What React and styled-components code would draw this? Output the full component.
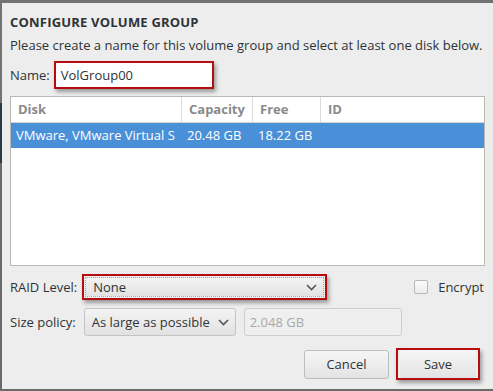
import React from 'react';
import styled, { createGlobalStyle } from 'styled-components';

const Global = createGlobalStyle`
  html, body {
    margin: 0;
    padding: 0;
    background: #7b7b7b;
    font-family: "Open Sans", "DejaVu Sans", sans-serif;
  }
`;

const Screen = styled.div`
  width: 493px;
  height: 391px;
  overflow: hidden;
  padding: 3px 0 2px 2px;
  box-sizing: border-box;
  background: linear-gradient(to bottom, #727272 0, #727272 103px, #2f3a47 103px, #2f3a47 163px, #6a6a6a 163px);
`;

const Dialog = styled.div`
  height: 100%;
  background: #ededed;
  color: #2e3436;
  font-size: 13px;
  padding: 9px 8px 0 8px;
  box-sizing: border-box;
  display: flex;
  flex-direction: column;
`;

const Title = styled.div`
  font-weight: bold;
  font-size: 13px;
  letter-spacing: 0.2px;
  height: 20px;
  line-height: 20px;
`;

const Hint = styled.div`
  margin-top: 3px;
  height: 20px;
  line-height: 20px;
`;

const Row = styled.div`
  display: flex;
  align-items: center;
  gap: ${({ gap }) => gap || 6}px;
  margin-top: ${({ top }) => top || 0}px;
  padding-right: ${({ right }) => right || 0}px;
`;

const Label = styled.span`
  white-space: nowrap;
`;

const Marked = styled.div`
  border: 2px solid #b50d0d;
  box-shadow: 2px 3px 4px rgba(0, 0, 0, 0.35);
  padding: ${({ pad }) => pad || 0};
  box-sizing: border-box;
  display: flex;
`;

const NameInput = styled.div`
  width: 156px;
  height: 24px;
  line-height: 24px;
  padding-left: 5px;
  background: #fff;
  box-sizing: border-box;
`;

const Table = styled.div`
  margin-top: 7px;
  height: 168px;
  background: #fff;
  border: 1px solid #b8b8b5;
  display: flex;
  flex-direction: column;
`;

const HeadRow = styled.div`
  display: grid;
  grid-template-columns: 170px 71px 68px 1fr;
  height: 25px;
  border-bottom: 1px solid #d6d6d6;
`;

const HeadCell = styled.div`
  font-weight: bold;
  color: #8a8a8a;
  padding-left: 7px;
  line-height: 25px;
  border-left: ${({ first }) => (first ? 'none' : '1px solid #dcdcdc')};
`;

const BodyRow = styled.div`
  display: grid;
  grid-template-columns: 170px 71px 68px 1fr;
  height: 25px;
  background: ${({ selected }) => (selected ? '#4a90d9' : 'transparent')};
  color: ${({ selected }) => (selected ? '#fff' : '#2e3436')};
`;

const Cell = styled.div`
  padding-left: ${({ first }) => (first ? 5 : 6)}px;
  line-height: 25px;
  white-space: nowrap;
  overflow: hidden;
`;

const Combo = styled.div`
  width: ${({ w }) => w}px;
  height: ${({ h }) => h || 26}px;
  box-sizing: border-box;
  border: ${({ dotted }) => (dotted ? '1px dotted #a5a5a5' : '1px solid #c4c4c4')};
  border-radius: ${({ dotted }) => (dotted ? 0 : 3)}px;
  background: linear-gradient(#f3f3f3, #e2e2e2);
  display: flex;
  align-items: center;
  justify-content: space-between;
  padding: 0 6px 0 7px;
`;

const Entry = styled.div`
  width: 158px;
  height: 28px;
  box-sizing: border-box;
  border: 1px solid #cdcdcd;
  border-radius: 3px;
  background: #efefef;
  color: #a9a9a9;
  padding-left: 5px;
  line-height: 26px;
`;

const Check = styled.div`
  width: 12px;
  height: 12px;
  border: 1px solid #b8b8b8;
  border-radius: 2px;
  background: linear-gradient(#fbfbfb, #ececec);
`;

const CheckLabel = styled.span`
  margin-left: 5px;
  margin-right: 1px;
`;

const Spacer = styled.div`
  flex: 1;
`;

const Button = styled.div`
  width: ${({ w }) => w}px;
  height: ${({ h }) => h || 29}px;
  box-sizing: border-box;
  border: ${({ flat }) => (flat ? 'none' : '1px solid #bdbdbd')};
  border-radius: 3px;
  background: linear-gradient(#f6f6f6, #e3e3e3);
  display: flex;
  align-items: center;
  justify-content: center;
`;

const Chevron = () => (
  <svg width="11" height="7" viewBox="0 0 11 7">
    <path d="M1 1l4.5 4.5L10 1" fill="none" stroke="#555" strokeWidth="1.6" />
  </svg>
);

export default function App() {
  return (
    <>
      <Global />
      <Screen>
        <Dialog>
          <Title>CONFIGURE VOLUME GROUP</Title>
          <Hint>Please create a name for this volume group and select at least one disk below.</Hint>
          <Row top={6} gap={4}>
            <Label>Name:</Label>
            <Marked>
              <NameInput>VolGroup00</NameInput>
            </Marked>
          </Row>
          <Table>
            <HeadRow>
              <HeadCell first>Disk</HeadCell>
              <HeadCell>Capacity</HeadCell>
              <HeadCell>Free</HeadCell>
              <HeadCell>ID</HeadCell>
            </HeadRow>
            <BodyRow selected>
              <Cell first>VMware, VMware Virtual S</Cell>
              <Cell>20.48 GB</Cell>
              <Cell>18.22 GB</Cell>
              <Cell />
            </BodyRow>
          </Table>
          <Row top={8} gap={5}>
            <Label>RAID Level:</Label>
            <Marked pad="1px">
              <Combo w={239} h={20} dotted>
                <span>None</span>
                <Chevron />
              </Combo>
            </Marked>
            <Spacer />
            <Check />
            <CheckLabel>Encrypt</CheckLabel>
          </Row>
          <Row top={8} gap={8}>
            <Label>Size policy:</Label>
            <Combo w={152} h={28}>
              <span>As large as possible</span>
              <Chevron />
            </Combo>
            <Entry>2.048 GB</Entry>
          </Row>
          <Row top={12} gap={7} right={5}>
            <Spacer />
            <Button w={85}>Cancel</Button>
            <Marked pad="0 2px">
              <Button w={76} h={28} flat>Save</Button>
            </Marked>
          </Row>
        </Dialog>
      </Screen>
    </>
  );
}
